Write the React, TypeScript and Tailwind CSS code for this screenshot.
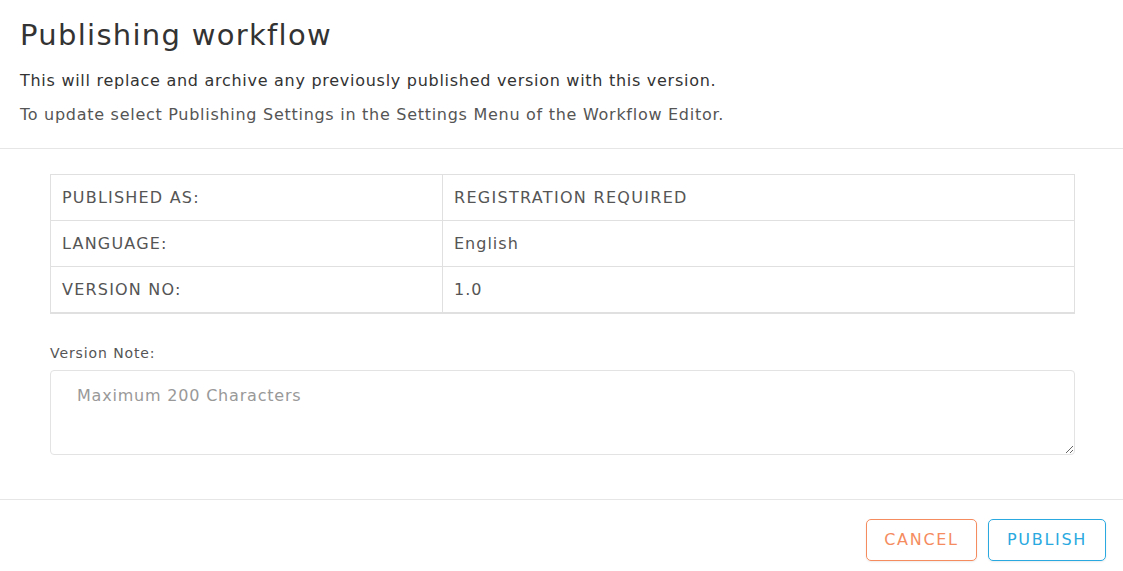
export default function App() {
  return (
    <div className="w-[1123px] h-[571px] bg-white text-[#333] font-['DejaVu_Sans',sans-serif] flex flex-col overflow-hidden">
      <div className="h-[149px] border-b border-[#e6e6e6] px-5 pt-[17px] shrink-0">
        <h1 className="text-[29px] leading-[36px] tracking-[1.3px] text-[#333]">Publishing workflow</h1>
        <p className="mt-[16px] text-[16px] leading-[24px] tracking-[0.72px] text-[#333]">
          This will replace and archive any previously published version with this version.
        </p>
        <p className="mt-[10px] text-[16px] leading-[24px] tracking-[0.72px] text-[#555]">
          To update select Publishing Settings in the Settings Menu of the Workflow Editor.
        </p>
      </div>
      <div className="h-[351px] border-b border-[#e6e6e6] pt-[25px] pl-[50px] pr-[48px] shrink-0">
        <div className="border border-[#e0e0e0] border-b-2 text-[16px] text-[#555]">
          {[
            ["PUBLISHED AS:", "REGISTRATION REQUIRED"],
            ["LANGUAGE:", "English"],
            ["VERSION NO:", "1.0"],
          ].map(([k, v], i) => (
            <div key={k} className={`flex ${i > 0 ? "h-[46px] border-t border-[#e0e0e0]" : "h-[45px]"}`}>
              <div className="w-[392px] border-r border-[#e0e0e0] pl-[11px] flex items-center tracking-[1.2px]">{k}</div>
              <div className={`flex-1 pl-[11px] flex items-center ${i === 0 ? "tracking-[1.3px]" : "tracking-[1px]"}`}>{v}</div>
            </div>
          ))}
        </div>
        <div className="mt-[30px] text-[14px] leading-[18px] tracking-[0.9px] text-[#555]">Version Note:</div>
        <textarea
          placeholder="Maximum 200 Characters"
          className="mt-[8px] block w-full h-[85px] border border-[#e3e3e3] rounded-[4px] pl-[26px] pt-[14px] text-[16px] leading-[22px] tracking-[0.8px] placeholder:text-[#999] outline-none"
        />
      </div>
      <div className="flex justify-end gap-[11px] pt-[19px] pr-[17px]">
        <button className="w-[111px] h-[42px] border border-[#f58c5f] rounded-[5px] text-[#f58c5f] text-[16px] tracking-[1.7px] shadow-[0_1px_2px_rgba(0,0,0,0.08)]">
          CANCEL
        </button>
        <button className="w-[118px] h-[42px] border border-[#2aa9e0] rounded-[5px] text-[#2aa9e0] text-[16px] tracking-[1.7px] shadow-[0_1px_2px_rgba(0,0,0,0.08)]">
          PUBLISH
        </button>
      </div>
    </div>
  );
}
